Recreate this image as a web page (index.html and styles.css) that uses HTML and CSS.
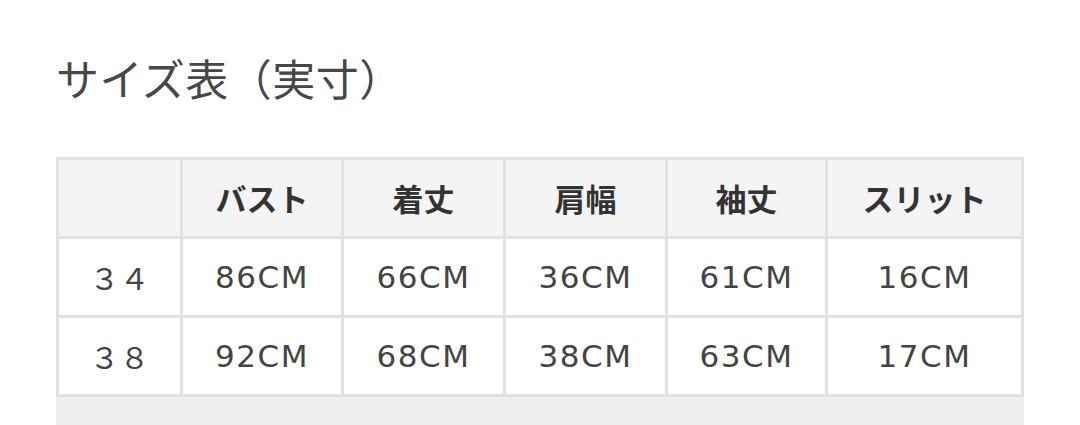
FILE: index.html
```html
<!DOCTYPE html>
<html lang="ja">
<head>
<meta charset="utf-8">
<link rel="stylesheet" href="styles.css">
</head>
<body>
<div class="page">
  <h2 class="title">サイズ表（実寸）</h2>
  <div class="table-wrap">
    <table class="size-table">
      <colgroup>
        <col class="c1"><col class="c2"><col class="c3"><col class="c4"><col class="c5"><col class="c6">
      </colgroup>
      <thead>
        <tr><th></th><th>バスト</th><th>着丈</th><th>肩幅</th><th>袖丈</th><th>スリット</th></tr>
      </thead>
      <tbody>
        <tr><td class="size">３４</td><td>86CM</td><td>66CM</td><td>36CM</td><td>61CM</td><td>16CM</td></tr>
        <tr><td class="size">３８</td><td>92CM</td><td>68CM</td><td>38CM</td><td>63CM</td><td>17CM</td></tr>
      </tbody>
    </table>
    <div class="strip"></div>
  </div>
</div>
</body>
</html>
```

FILE: styles.css
```css
html, body {
  margin: 0;
  padding: 0;
  background: #ffffff;
}
body {
  font-family: "Noto Sans CJK JP", "Noto Sans", sans-serif;
  color: #444444;
}
.page {
  width: 1080px;
  height: 425px;
  overflow: hidden;
  padding: 0 56px;
  box-sizing: border-box;
}
.title {
  margin: 0;
  padding: 47px 0 0 0;
  height: 157px;
  box-sizing: border-box;
  font-size: 43px;
  font-weight: 400;
  line-height: 60px;
  color: #474747;
  letter-spacing: 0.5px;
}
.table-wrap {
  width: 968px;
}
.size-table {
  width: 968px;
  border-collapse: separate;
  border-spacing: 0;
  table-layout: fixed;
  border-left: 3px solid #e2e2e2;
  border-top: 3px solid #e2e2e2;
  box-sizing: border-box;
}
.c1 { width: 124px; }
.c2 { width: 161px; }
.c3 { width: 162px; }
.c4 { width: 162px; }
.c5 { width: 160px; }
.c6 { width: 196px; }
.size-table th,
.size-table td {
  border-right: 3px solid #e2e2e2;
  border-bottom: 3px solid #e2e2e2;
  height: 79px;
  box-sizing: border-box;
  padding: 0;
  text-align: center;
  vertical-align: middle;
  line-height: 40px;
}
.size-table th {
  background: #f4f4f4;
  font-weight: 700;
  font-size: 31px;
  color: #333333;
}
.size-table td {
  background: #ffffff;
  font-family: "DejaVu Sans", "Noto Sans CJK JP", sans-serif;
  font-weight: 400;
  font-size: 31px;
  letter-spacing: 1.5px;
  color: #444444;
}
.size-table td.size {
  font-family: "Noto Sans CJK JP", sans-serif;
  font-size: 30px;
  letter-spacing: 0;
}
.strip {
  height: 40px;
  background: #efefef;
}
```
